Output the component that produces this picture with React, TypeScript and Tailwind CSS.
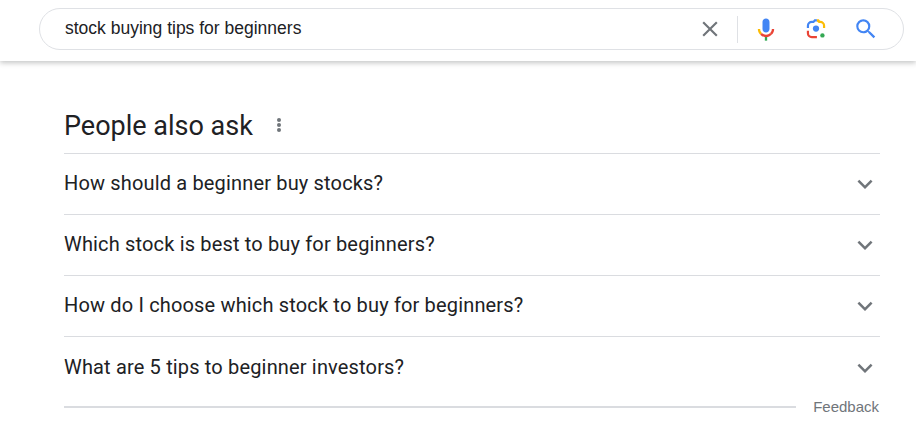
const questions = [
  "How should a beginner buy stocks?",
  "Which stock is best to buy for beginners?",
  "How do I choose which stock to buy for beginners?",
  "What are 5 tips to beginner investors?",
];

function Chevron() {
  return (
    <svg width="30" height="30" viewBox="0 0 24 24" fill="#70757a">
      <path d="M16.59 8.59 12 13.17 7.41 8.59 6 10l6 6 6-6z" />
    </svg>
  );
}

export default function App() {
  return (
    <div className="w-[916px] h-[427px] overflow-hidden bg-white font-['Roboto',sans-serif]">
      <header className="h-[61px] bg-white pt-2 pl-[39px] pr-[12px] shadow-[0_2px_5px_rgba(32,33,36,0.26)]">
        <div className="h-[42px] flex items-center rounded-[21px] border border-[#dfe1e5] pl-[25px] bg-white">
          <span className="flex-1 text-[17.5px] pb-[2px] text-[#202124] font-['Liberation_Sans',sans-serif]">stock buying tips for beginners</span>
          <svg width="26" height="26" viewBox="0 0 24 24" fill="#70757a">
            <path d="M19 6.41 17.59 5 12 10.59 6.41 5 5 6.41 10.59 12 5 17.59 6.41 19 12 13.41 17.59 19 19 17.59 13.41 12z" />
          </svg>
          <div className="w-px h-[27px] bg-[#dfe1e5] ml-[14px] mr-[14px]" />
          <svg width="28" height="28" viewBox="0 0 24 24" className="mr-[25px]">
            <path fill="#4285f4" d="M12 15c1.66 0 3-1.31 3-2.97V5.97C15 4.31 13.66 3 12 3S9 4.31 9 5.97v6.06C9 13.69 10.34 15 12 15z" />
            <path fill="#34a853" d="M11 18.08h2V22h-2z" />
            <path fill="#fbbc04" d="M7.05 16.87c-1.27-1.33-2.05-2.83-2.05-4.87h2c0 1.45.56 2.42 1.47 3.38l-1.42 1.49z" />
            <path fill="#ea4335" d="M12 16.93a4.97 5.25 0 0 1-3.54-1.55l-1.41 1.49A6.95 7.35 0 0 0 12 19c1.93 0 3.75-.84 5.07-2.2l-1.46-1.41A4.97 5.25 0 0 1 12 16.93z" />
            <path fill="#ea4335" d="M17 12c0 1.45-.55 2.4-1.39 3.39l1.46 1.41C18.3 15.5 19 14.04 19 12h-2z" />
          </svg>
          <svg width="22" height="22" viewBox="0 0 24 24" className="mr-[26px]">
            <path fill="#ea4335" d="M2 14h2.4v2.6a3 3 0 0 0 3 3H13V22H7.4A5.4 5.4 0 0 1 2 16.6z" />
            <path fill="#4285f4" d="M2 8.4A5.4 5.4 0 0 1 7.4 3h1.4l1.4-1.6H13v2.4h-1.8L9.8 5.4H7.4a3 3 0 0 0-3 3V11H2z" />
            <path fill="#fbbc04" d="M13 1.4h2l1.4 1.6a5.4 5.4 0 0 1 5.6 5.4V11h-2.4V8.4a3 3 0 0 0-3-3h-1.6L13 3.8z" />
            <circle cx="12" cy="11.5" r="3.4" fill="#4285f4" />
            <circle cx="19" cy="19" r="2.4" fill="#34a853" />
          </svg>
          <svg width="26" height="26" viewBox="0 0 24 24" fill="#4285f4" className="mr-[24px]">
            <path d="M15.5 14h-.79l-.28-.27A6.47 6.47 0 0 0 16 9.5 6.5 6.5 0 1 0 9.5 16c1.61 0 3.09-.59 4.23-1.57l.27.28v.79l5 4.99L20.49 19l-4.99-5zm-6 0C7.01 14 5 11.99 5 9.5S7.01 5 9.5 5 14 7.01 14 9.5 11.99 14 9.5 14z" />
          </svg>
        </div>
      </header>

      <main className="pl-[64px] pr-[36px]">
        <div className="h-[93px] pt-[47px] flex items-start border-b border-[#dadce0]">
          <h2 className="text-[27px] leading-[36px] text-[#202124]">People also ask</h2>
          <svg width="24" height="24" viewBox="0 0 24 24" fill="#70757a" className="ml-[14px] mt-[5px]">
            <circle cx="12" cy="7" r="2" />
            <circle cx="12" cy="12" r="2" />
            <circle cx="12" cy="17" r="2" />
          </svg>
        </div>
        {questions.map((q, i) => (
          <div key={q} className={i < 3 ? "h-[61px] flex items-center justify-between border-b border-[#dadce0]" : "h-[61px] flex items-center justify-between"}>
            <span className="text-[20px] leading-6 pb-[2px] tracking-[0.16px] text-[#202124]">{q}</span>
            <Chevron />
          </div>
        ))}
        <div className="flex items-center -mt-[2px]">
          <div className="flex-1 h-0.5 bg-[#dadce0]" />
          <span className="ml-[17px] mr-[1px] text-[15px] text-[#70757a] font-['Liberation_Sans',sans-serif]">Feedback</span>
        </div>
      </main>
    </div>
  );
}
